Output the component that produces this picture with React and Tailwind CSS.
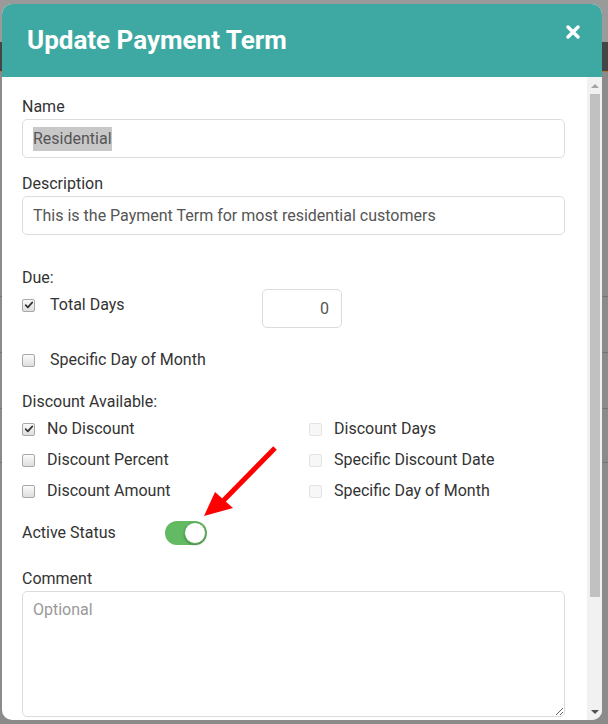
import React from "react";

function Box({ checked, disabled }) {
  return (
    <span
      className={
        "flex h-[13px] w-[13px] shrink-0 items-center justify-center rounded-[2px] border " +
        (disabled
          ? "border-[#e3e3e3] bg-[#f7f7f7]"
          : "border-[#a8a8a8] bg-gradient-to-b from-[#fbfbfb] to-[#dedede]")
      }
    >
      {checked && (
        <svg viewBox="0 0 12 12" className="h-[10px] w-[10px]">
          <path
            d="M2 6.2 L4.6 8.8 L10 2.8"
            fill="none"
            stroke="#333"
            strokeWidth="2"
            strokeLinecap="round"
            strokeLinejoin="round"
          />
        </svg>
      )}
    </span>
  );
}

function Option({ label, checked, disabled, gap = "gap-[12px]" }) {
  return (
    <div className={"flex h-5 items-center " + gap}>
      <Box checked={checked} disabled={disabled} />
      <span className="text-base leading-5 text-[#333]">{label}</span>
    </div>
  );
}

export default function App() {
  return (
    <div className="relative h-[724px] w-[608px] overflow-hidden bg-[#8b8b8b] font-['Roboto',sans-serif]">
      {/* page behind the overlay */}
      <div className="h-[42px] bg-[#9a9a9a]" />
      <div className="h-[30px] border-b border-[#a8783a] bg-[#454545]" />
      <div className="h-[225px] border-b border-[#757575]" />
      <div className="h-[56px] border-b border-[#757575]" />
      <div className="h-[56px] border-b border-[#757575]" />
      <div className="h-[54px] border-b border-[#757575]" />

      {/* modal */}
      <div className="absolute left-[2px] top-[4px] flex h-[716px] w-[600px] flex-col overflow-hidden rounded-[10px] bg-white">
        <div className="flex h-[73px] shrink-0 justify-between bg-[#3ea9a2] pl-[25px] pr-[22px]">
          <h1 className="mt-[21px] text-[26px] font-bold leading-[30px] text-white">
            Update Payment Term
          </h1>
          <svg viewBox="0 0 14 14" className="mt-[21px] h-[14px] w-[14px]">
            <path
              d="M2 2 L12 12 M12 2 L2 12"
              stroke="#fff"
              strokeWidth="3.4"
              strokeLinecap="round"
            />
          </svg>
        </div>

        <div className="flex min-h-0 flex-1">
          <div className="flex-1 pl-[20px] pr-[22px] pt-[20px] text-[#333]">
            <div className="text-base leading-5">Name</div>
            <div className="mt-[2px] flex h-[39px] items-center rounded-[5px] border border-[#dcdcdc] px-[10px] text-base text-[#555]">
              <span className="bg-[#c8c8c8]">Residential</span>
            </div>

            <div className="mt-4 text-base leading-5">Description</div>
            <div className="mt-[2px] flex h-[39px] items-center rounded-[5px] border border-[#dcdcdc] px-[10px] text-base text-[#555]">
              This is the Payment Term for most residential customers
            </div>

            <div className="mt-[33px] text-base leading-5">Due:</div>
            <div className="mt-[1px] flex items-start">
              <div className="mt-[6px] w-[240px]">
                <Option label="Total Days" checked gap="gap-[15px]" />
              </div>
              <div className="flex h-[39px] w-[80px] items-center justify-end rounded-[5px] border border-[#dcdcdc] pr-[12px] text-base text-[#555]">
                0
              </div>
            </div>
            <div className="mt-[22px]">
              <Option label="Specific Day of Month" gap="gap-[15px]" />
            </div>

            <div className="mt-[22px] text-base leading-5">Discount Available:</div>
            <div className="mt-[7px] grid grid-cols-[287px_1fr] gap-y-[11px]">
              <Option label="No Discount" checked />
              <Option label="Discount Days" disabled />
              <Option label="Discount Percent" />
              <Option label="Specific Discount Date" disabled />
              <Option label="Discount Amount" />
              <Option label="Specific Day of Month" disabled />
            </div>

            <div className="mt-[22px] flex h-5 items-center">
              <span className="w-[143px] text-base leading-5">Active Status</span>
              <span className="flex h-[24px] w-[42px] items-center justify-end rounded-full bg-[#62bb62] pr-[1px]">
                <span className="h-[22px] w-[22px] rounded-full border border-[#5aa85a] bg-white shadow-[0_1px_2px_rgba(0,0,0,0.3)]" />
              </span>
            </div>

            <div className="mt-[26px] text-base leading-5">Comment</div>
            <textarea
              readOnly
              placeholder="Optional"
              className="mt-[2px] block h-[126px] w-full rounded-[5px] border border-[#dcdcdc] px-[10px] py-[8px] text-base leading-5 text-[#555] placeholder:text-[#999] focus:outline-none"
            />
          </div>

          {/* scrollbar */}
          <div className="flex w-[15px] shrink-0 flex-col items-center bg-[#f1f1f1]">
            <div className="flex h-[17px] items-center">
              <span className="h-0 w-0 border-x-[4px] border-b-[4px] border-x-transparent border-b-[#a3a3a3]" />
            </div>
            <div className="h-[503px] w-[10px] bg-[#c1c1c1]" />
            <div className="flex-1" />
            <div className="flex h-[17px] items-center">
              <span className="h-0 w-0 border-x-[4px] border-t-[4px] border-x-transparent border-t-[#505050]" />
            </div>
          </div>
        </div>
      </div>

      {/* red annotation arrow */}
      <svg className="absolute left-0 top-0 h-[724px] w-[608px]" viewBox="0 0 608 724">
        <line x1="275" y1="448" x2="222" y2="502" stroke="#ff0000" strokeWidth="5" />
        <polygon points="204,516 215,492 233,508" fill="#ff0000" />
      </svg>
    </div>
  );
}
